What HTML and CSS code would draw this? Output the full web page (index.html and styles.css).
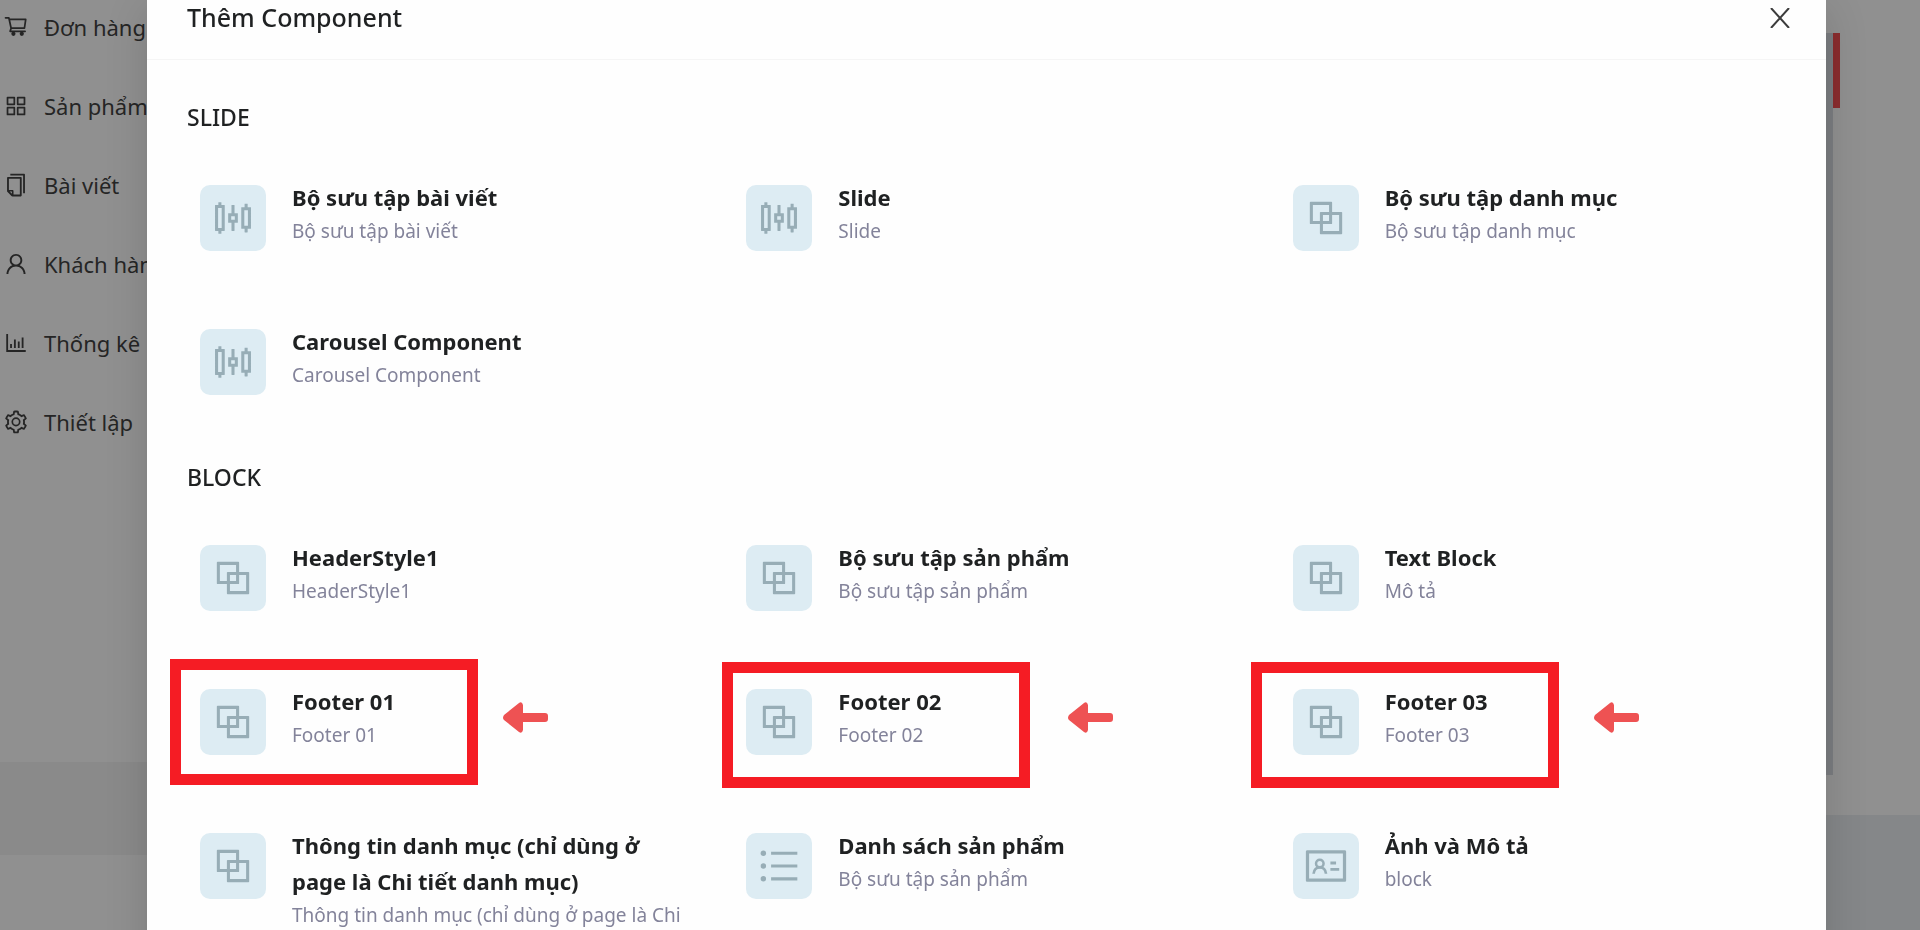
FILE: index.html
```html
<!DOCTYPE html>
<html lang="vi">
<head>
  <meta charset="UTF-8">
  <title>Thêm Component</title>
  <meta name="viewport" content="width=device-width, initial-scale=1.0">
  <link rel="stylesheet" href="styles.css">
</head>
<body>

  <!-- icon set -->
  <svg class="icon-defs" aria-hidden="true">
    <symbol id="icon-cart" viewBox="0 0 1024 1024">
      <path fill="none" stroke="currentColor" stroke-width="68" stroke-linejoin="round" stroke-linecap="round" d="M100 150h130l90 410-40 120h590M245 212h650l-50 348H320"/>
      <circle cx="410" cy="780" r="84"/>
      <circle cx="740" cy="780" r="84"/>
    </symbol>
    <symbol id="icon-appstore" viewBox="0 0 1024 1024">
      <path fill="none" stroke="currentColor" stroke-width="68" stroke-linejoin="round" d="M178 178h268v268H178zM578 178h268v268H578zM178 578h268v268H178zM578 578h268v268H578z"/>
    </symbol>
    <symbol id="icon-copy" viewBox="0 0 1024 1024">
      <path d="M832 64H296c-4.400 0-8 3.600-8 8v56c0 4.400 3.600 8 8 8h496v688c0 4.400 3.600 8 8 8h56c4.400 0 8-3.600 8-8V96c0-17.700-14.300-32-32-32zM704 192H192c-17.700 0-32 14.300-32 32v530.700c0 8.500 3.400 16.600 9.400 22.600l173.300 173.300c2.200 2.200 4.700 4 7.400 5.500v1.900h4.200c3.500 1.300 7.200 2 11 2H704c17.700 0 32-14.300 32-32V224c0-17.700-14.300-32-32-32zM350 856.200L263.900 770H350v86.200zM664 888H414V746c0-22.100-17.900-40-40-40H232V264h432v624z"/>
    </symbol>
    <symbol id="icon-user" viewBox="0 0 1024 1024">
      <path d="M858.500 763.600a374 374 0 00-80.600-119.500 375.630 375.630 0 00-119.500-80.600c-.4-.2-.8-.3-1.200-.5C719.500 518 760 444.700 760 362c0-137-111-248-248-248S264 225 264 362c0 82.700 40.500 156 102.800 201.100-.4.2-.8.3-1.200.5-44.800 18.900-85 46-119.500 80.600a375.630 375.630 0 00-80.600 119.500A371.700 371.700 0 00136 901.800a8 8 0 008 8.200h60c4.400 0 7.900-3.500 8-7.800 2-77.200 33-149.500 87.800-204.300 56.700-56.700 132-87.900 212.200-87.900s155.500 31.200 212.200 87.900C779 752.700 810 825 812 902.200c.1 4.400 3.600 7.800 8 7.800h60a8 8 0 008-8.200c-1-47.800-10.900-94.300-29.500-138.200zM512 534c-45.900 0-89.100-17.900-121.600-50.400S340 407.900 340 362c0-45.900 17.900-89.100 50.400-121.600S466.100 190 512 190s89.100 17.900 121.600 50.400S684 316.100 684 362c0 45.900-17.900 89.100-50.400 121.600S557.900 534 512 534z"/>
    </symbol>
    <symbol id="icon-chart" viewBox="0 0 1024 1024">
      <path d="M888 792H200V168c0-4-4-8-8-8h-56c-4 0-8 4-8 8v688c0 4 4 8 8 8h752c4 0 8-4 8-8v-56c0-4-4-8-8-8zM280 552h72v160h-72zM432 376h72v336h-72zM584 454h72v258h-72zM736 296h72v416h-72z"/>
    </symbol>
    <symbol id="icon-setting" viewBox="0 0 1024 1024">
      <path d="M924.800 625.700l-65.500-56c3.100-19 4.700-38.400 4.700-57.800s-1.600-38.800-4.700-57.800l65.500-56a32.030 32.030 0 009.300-35.200l-.9-2.600a443.740 443.740 0 00-79.700-137.900l-1.800-2.100a32.120 32.120 0 00-35.100-9.500l-81.300 28.900c-30-24.600-63.500-44-99.700-57.600l-15.700-85a32.050 32.050 0 00-25.800-25.700l-2.700-.5c-52.100-9.400-106.900-9.400-159 0l-2.700.5a32.050 32.050 0 00-25.800 25.700l-15.800 85.400a351.860 351.860 0 00-99 57.400l-81.900-29.100a32 32 0 00-35.100 9.500l-1.800 2.100a446.020 446.020 0 00-79.700 137.900l-.9 2.600c-4.500 12.500-.8 26.500 9.300 35.200l66.300 56.600c-3.100 18.800-4.600 38-4.600 57.100 0 19.200 1.500 38.400 4.600 57.100L99 625.500a32.030 32.030 0 00-9.300 35.200l.9 2.600c18.100 50.400 44.900 96.900 79.700 137.900l1.800 2.100a32.120 32.120 0 0035.100 9.500l81.900-29.100c29.800 24.500 63.100 43.900 99 57.400l15.800 85.400a32.050 32.050 0 0025.800 25.700l2.700.5a449.400 449.400 0 00159 0l2.700-.5a32.050 32.050 0 0025.800-25.700l15.700-85a350 350 0 0099.700-57.600l81.300 28.900a32 32 0 0035.100-9.500l1.800-2.100c34.800-41.100 61.600-87.500 79.700-137.900l.9-2.600c4.500-12.300.8-26.300-9.300-35zM788.300 465.900c2.500 15.100 3.800 30.600 3.800 46.100s-1.300 31-3.800 46.100l-6.600 40.100 74.700 63.900a370.030 370.030 0 01-42.600 73.600L721 702.800l-31.400 25.800c-23.900 19.600-50.500 35-79.300 45.800l-38.100 14.300-17.900 97a377.500 377.500 0 01-85 0l-17.900-97.200-37.800-14.500c-28.500-10.800-55-26.200-78.700-45.700l-31.400-25.900-93.400 33.200c-17-22.900-31.200-47.600-42.600-73.600l75.500-64.500-6.500-40c-2.400-14.900-3.700-30.300-3.700-45.500 0-15.300 1.200-30.600 3.700-45.500l6.500-40-75.500-64.500c11.300-26.100 25.600-50.700 42.600-73.600l93.400 33.200 31.400-25.900c23.700-19.500 50.200-34.900 78.700-45.700l37.900-14.300 17.900-97.200c28.100-3.200 56.800-3.200 85 0l17.900 97 38.100 14.300c28.700 10.800 55.400 26.200 79.300 45.800l31.400 25.800 92.800-32.900c17 22.900 31.200 47.600 42.600 73.600L781.800 426l6.500 39.900z"/>
      <circle cx="512" cy="506" r="146" fill="none" stroke="currentColor" stroke-width="66"/>
    </symbol>
    <symbol id="icon-sliders" viewBox="0 0 1024 1024">
      <path fill-rule="evenodd" d="M320 224h-66v-56c0-4-4-8-8-8h-52c-4 0-8 4-8 8v56h-66c-4 0-8 4-8 8v560c0 4 4 8 8 8h66v56c0 4 4 8 8 8h52c4 0 8-4 8-8v-56h66c4 0 8-4 8-8V232c0-4-4-8-8-8zm-60 508h-80V292h80v440zM904 272h-66v-72c0-4-4-8-8-8h-52c-4 0-8 4-8 8v72h-66c-4 0-8 4-8 8v464c0 4 4 8 8 8h66v72c0 4 4 8 8 8h52c4 0 8-4 8-8v-72h66c4 0 8-4 8-8V280c0-4-4-8-8-8zm-60 412h-80V340h80v344zM612 404h-66V232c0-4-4-8-8-8h-52c-4 0-8 4-8 8v172h-66c-4 0-8 4-8 8v200c0 4 4 8 8 8h66v172c0 4 4 8 8 8h52c4 0 8-4 8-8V620h66c4 0 8-4 8-8V412c0-4-4-8-8-8zm-60 148h-80v-80h80v80z"/>
    </symbol>
    <symbol id="icon-block" viewBox="0 0 1024 1024">
      <path d="M856 376H648V168c0-9-7-16-16-16H168c-9 0-16 7-16 16v464c0 9 7 16 16 16h208v208c0 9 7 16 16 16h464c9 0 16-7 16-16V392c0-9-7-16-16-16zm-480 16v188H220V220h360v156H392c-9 0-16 7-16 16zm204 52v136H444V444h136zm224 360H444V648h188c9 0 16-7 16-16V444h156v360z"/>
    </symbol>
    <symbol id="icon-list" viewBox="0 0 1024 1024">
      <path d="M336 192h584v72H336zM336 476h584v72H336zM336 760h584v72H336z"/>
      <circle cx="164" cy="228" r="60"/>
      <circle cx="164" cy="512" r="60"/>
      <circle cx="164" cy="796" r="60"/>
    </symbol>
    <symbol id="icon-idcard" viewBox="0 0 1024 1024">
      <path d="M928 160H96c-18 0-32 14-32 32v640c0 18 14 32 32 32h832c18 0 32-14 32-32V192c0-18-14-32-32-32zm-40 632H136V232h752v560zM610 412h126v64H610zM610 556h196v64H610z"/>
      <path fill="none" stroke="currentColor" stroke-width="60" d="M236 684c6-90 66-142 138-142s132 52 138 142"/>
      <circle cx="374" cy="456" r="84" fill="none" stroke="currentColor" stroke-width="56"/>
    </symbol>
    <symbol id="icon-arrow" viewBox="0 0 45 31">
      <path d="M1 13L16 1q3-2 4 2v8h22q3 0 3 3v3q0 3-3 3H20v8q-1 4-4 2L1 18q-2-2 0-5z"/>
    </symbol>
  </svg>

  <div class="page">
    <nav class="sidebar">
      <a href="#"><svg><use href="#icon-cart"/></svg>Đơn hàng</a>
      <a href="#"><svg><use href="#icon-appstore"/></svg>Sản phẩm</a>
      <a href="#"><svg><use href="#icon-copy"/></svg>Bài viết</a>
      <a href="#"><svg><use href="#icon-user"/></svg>Khách hàng</a>
      <a href="#"><svg><use href="#icon-chart"/></svg>Thống kê</a>
      <a href="#"><svg><use href="#icon-setting"/></svg>Thiết lập</a>
      <div class="sidebar-footer"></div>
    </nav>
    <div class="preview">
      <div class="preview-track">
        <div class="preview-marker"></div>
      </div>
      <div class="preview-footer"></div>
    </div>
  </div>

  <div class="modal-wrap">
    <div class="modal" role="dialog" aria-labelledby="modal-title">
      <header class="modal-header">
        <h1 id="modal-title">Thêm Component</h1>
        <button class="close" aria-label="Đóng">
          <svg viewBox="0 0 20 20"><path d="M1 0l18 20M19 0L1 20"/></svg>
        </button>
      </header>

      <div class="modal-body">
        <section>
          <h2>SLIDE</h2>
          <div class="items">
            <button class="item">
              <span class="thumb"><svg><use href="#icon-sliders"/></svg></span>
              <span class="info"><strong>Bộ sưu tập bài viết</strong><small>Bộ sưu tập bài viết</small></span>
            </button>
            <button class="item">
              <span class="thumb"><svg><use href="#icon-sliders"/></svg></span>
              <span class="info"><strong>Slide</strong><small>Slide</small></span>
            </button>
            <button class="item">
              <span class="thumb"><svg><use href="#icon-block"/></svg></span>
              <span class="info"><strong>Bộ sưu tập danh mục</strong><small>Bộ sưu tập danh mục</small></span>
            </button>
            <button class="item">
              <span class="thumb"><svg><use href="#icon-sliders"/></svg></span>
              <span class="info"><strong>Carousel Component</strong><small>Carousel Component</small></span>
            </button>
          </div>
        </section>

        <section>
          <h2>BLOCK</h2>
          <div class="items">
            <button class="item">
              <span class="thumb"><svg><use href="#icon-block"/></svg></span>
              <span class="info"><strong>HeaderStyle1</strong><small>HeaderStyle1</small></span>
            </button>
            <button class="item">
              <span class="thumb"><svg><use href="#icon-block"/></svg></span>
              <span class="info"><strong>Bộ sưu tập sản phẩm</strong><small>Bộ sưu tập sản phẩm</small></span>
            </button>
            <button class="item">
              <span class="thumb"><svg><use href="#icon-block"/></svg></span>
              <span class="info"><strong>Text Block</strong><small>Mô tả</small></span>
            </button>
            <button class="item marked footer-1">
              <span class="thumb"><svg><use href="#icon-block"/></svg></span>
              <span class="info"><strong>Footer 01</strong><small>Footer 01</small></span>
              <svg class="arrow"><use href="#icon-arrow"/></svg>
            </button>
            <button class="item marked footer-2">
              <span class="thumb"><svg><use href="#icon-block"/></svg></span>
              <span class="info"><strong>Footer 02</strong><small>Footer 02</small></span>
              <svg class="arrow"><use href="#icon-arrow"/></svg>
            </button>
            <button class="item marked footer-3">
              <span class="thumb"><svg><use href="#icon-block"/></svg></span>
              <span class="info"><strong>Footer 03</strong><small>Footer 03</small></span>
              <svg class="arrow"><use href="#icon-arrow"/></svg>
            </button>
            <button class="item">
              <span class="thumb"><svg><use href="#icon-block"/></svg></span>
              <span class="info"><strong>Thông tin danh mục (chỉ dùng ở page là Chi tiết danh mục)</strong><small>Thông tin danh mục (chỉ dùng ở page là Chi</small></span>
            </button>
            <button class="item">
              <span class="thumb"><svg><use href="#icon-list"/></svg></span>
              <span class="info"><strong>Danh sách sản phẩm</strong><small>Bộ sưu tập sản phẩm</small></span>
            </button>
            <button class="item">
              <span class="thumb"><svg><use href="#icon-idcard"/></svg></span>
              <span class="info"><strong>Ảnh và Mô tả</strong><small>block</small></span>
            </button>
          </div>
        </section>
      </div>
    </div>
  </div>

</body>
</html>
```
FILE: styles.css
```css
*,
*::before {
  box-sizing: border-box;
}

body {
  margin: 0;
  height: 100vh;
  overflow: hidden;
  background: #909090;
  font-family: 'Segoe UI', 'Noto Sans', sans-serif;
  color: #1f2122;
}

svg {
  fill: currentColor;
  flex: none;
}

.icon-defs {
  position: absolute;
  width: 0;
  height: 0;
}

/* page behind the modal */
.page {
  display: flex;
  justify-content: space-between;
  height: 100vh;
}

.sidebar {
  display: flex;
  flex-direction: column;
  width: 280px;
  margin-top: -13px;
}

.sidebar a {
  display: flex;
  align-items: center;
  gap: 15px;
  height: 79px;
  padding-left: 3px;
  font-size: 22px;
  color: #252525;
  text-decoration: none;
  white-space: nowrap;
}

.sidebar a svg {
  width: 26px;
  height: 26px;
}

.sidebar-footer {
  height: 93px;
  margin-top: auto;
  margin-bottom: 75px;
  background: #8a8a8a;
}

.preview {
  display: flex;
  flex-direction: column;
  justify-content: space-between;
  width: 94px;
  padding-top: 33px;
}

.preview-track {
  width: 7px;
  height: 742px;
  background: #7b7d81;
}

.preview-marker {
  width: 7px;
  height: 75px;
  margin-left: 7px;
  background: #8a2c2e;
}

.preview-footer {
  height: 115px;
  background: #858789;
}

/* modal */
.modal-wrap {
  position: fixed;
  inset: 0;
  padding: 0 94px 0 147px;
}

.modal {
  min-height: 100%;
  background: #fefefe;
  box-shadow: 0 10px 40px rgba(0, 0, 0, 0.15);
}

.modal-header {
  display: flex;
  justify-content: space-between;
  align-items: center;
  padding: 0 36px 24px 40px;
  border-bottom: 1px solid #f5f5f5;
}

h1,
h2 {
  margin: 0;
  font-weight: 500;
  line-height: 35px;
}

h1 {
  font-size: 25px;
}

h2 {
  font-size: 23px;
}

button {
  border: none;
  padding: 0;
  background: none;
  font-family: inherit;
  color: inherit;
  cursor: pointer;
}

.close {
  display: flex;
}

.close svg {
  width: 20px;
  height: 20px;
  stroke: #3c3c3c;
  stroke-width: 2;
}

.modal-body {
  display: flex;
  flex-direction: column;
  gap: 65px;
  padding: 40px 0 40px 40px;
}

.items {
  display: grid;
  grid-template-columns: repeat(3, 1fr);
  row-gap: 72px;
  margin-top: 44px;
}

.item {
  position: relative;
  display: flex;
  align-items: flex-start;
  gap: 26px;
  min-height: 72px;
  padding: 0 44px 0 13px;
  text-align: left;
}

.thumb {
  display: flex;
  justify-content: center;
  align-items: center;
  flex: none;
  width: 66px;
  height: 66px;
  margin-top: 6px;
  border-radius: 10px;
  background: #ddecf3;
  color: #97adb6;
}

.thumb svg {
  width: 46px;
  height: 46px;
}

.info strong,
.info small {
  display: block;
}

.info strong {
  font-size: 22px;
  font-weight: 700;
  line-height: 36px;
}

.info small {
  font-size: 19px;
  line-height: 32px;
  color: #83839a;
}

/* red frame and arrow over the footer blocks */
.marked::before {
  content: '';
  position: absolute;
  top: -21px;
  width: 308px;
  height: 126px;
  border: 11px solid #f51c24;
}

.arrow {
  position: absolute;
  top: 19px;
  width: 45px;
  height: 31px;
  color: #ee5253;
}

.footer-1::before {
  top: -24px;
  left: -17px;
}

.footer-1 .arrow {
  left: 316px;
}

.footer-2::before {
  left: -11px;
}

.footer-2 .arrow {
  left: 335px;
}

.footer-3::before {
  left: -29px;
}

.footer-3 .arrow {
  left: 314px;
}
```
